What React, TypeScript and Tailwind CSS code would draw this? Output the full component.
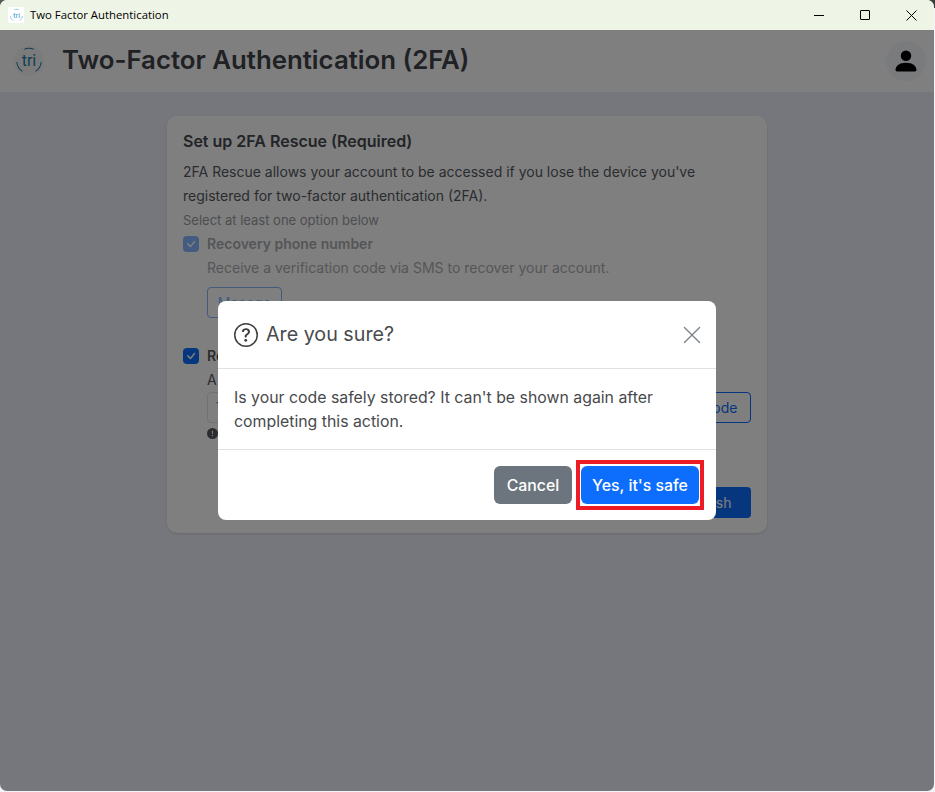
import React from "react";
import { BsQuestionCircle, BsXLg, BsPersonFill, BsExclamationCircleFill, BsCheck } from "react-icons/bs";

const inter = { fontFamily: "Inter, sans-serif" };

// small round "tri" logo, used in the title bar and the header
function TriLogo({ size, color, bg }: { size: number; color: string; bg?: string }) {
  return (
    <svg width={size} height={size} viewBox="0 0 32 32" fill="none">
      {bg && <circle cx="16" cy="16" r="16" fill={bg} />}
      <path d="M11 3.5a13.5 13.5 0 0 1 10 0" stroke={color} strokeWidth="1.1" />
      <path d="M3 17a13.5 13.5 0 0 0 6 10" stroke={color} strokeWidth="1.1" />
      <path d="M29 17a13.5 13.5 0 0 1-6 10" stroke={color} strokeWidth="1.1" />
      <text x="16" y="21.5" textAnchor="middle" fontSize="17" fill={color} fontFamily="Roboto, sans-serif">
        tri
      </text>
    </svg>
  );
}

function Checkbox() {
  return (
    <span className="flex h-4 w-4 shrink-0 items-center justify-center rounded-[4px] bg-[#0d6efd] text-white">
      <BsCheck size={16} />
    </span>
  );
}

function TitleBar() {
  return (
    <div className="flex h-[30px] shrink-0 items-center bg-[#eff5e6] pl-2 text-black">
      <span className="flex h-4 w-4 items-center justify-center bg-white">
        <TriLogo size={15} color="#3b9fd8" />
      </span>
      <span className="ml-[6px] text-[11.35px]" style={{ fontFamily: "'Open Sans', sans-serif" }}>
        Two Factor Authentication
      </span>
      <div className="ml-auto flex items-center">
        <span className="flex h-[30px] w-[46px] items-center justify-center">
          <span className="h-px w-[10px] bg-black" />
        </span>
        <span className="flex h-[30px] w-[46px] items-center justify-center">
          <span className="h-[10px] w-[10px] rounded-[1px] border border-black" />
        </span>
        <span className="flex h-[30px] w-[46px] items-center justify-center">
          <svg width="11" height="11" viewBox="0 0 11 11" stroke="black" strokeWidth="1">
            <path d="M.5.5l10 10M10.5.5l-10 10" />
          </svg>
        </span>
      </div>
    </div>
  );
}

function Header() {
  return (
    <div className="flex h-[62px] shrink-0 items-center bg-white pl-[14px] pr-[8px]">
      <TriLogo size={30} color="#1f7fa8" bg="#f6f6f8" />
      <h1 className="mb-[2px] ml-[18px] text-[25.8px] font-semibold text-[#3f4349]">
        Two-Factor Authentication (2FA)
      </h1>
      <div className="ml-auto flex h-10 w-10 items-center justify-center rounded-full bg-[#f5f6fa] text-black">
        <BsPersonFill size={28} />
      </div>
    </div>
  );
}

function RescueCard() {
  return (
    <div className="mx-auto mt-6 h-[417px] w-[600px] rounded-[10px] bg-white p-4 text-[14px] leading-6 text-[#55595e] shadow-sm">
      <h2 className="text-[16px] font-semibold leading-[18px] text-[#45494e]">Set up 2FA Rescue (Required)</h2>
      <p className="mt-[10px]">
        2FA Rescue allows your account to be accessed if you lose the device you've registered for two-factor
        authentication (2FA).
      </p>
      <p className="text-[13px] text-[#989ca1]">Select at least one option below</p>

      <div className="opacity-50">
        <div className="flex items-center gap-2">
          <Checkbox />
          <span className="font-semibold">Recovery phone number</span>
        </div>
        <p className="pl-6">Receive a verification code via SMS to recover your account.</p>
        <button className="ml-6 mt-[7px] h-[31px] w-[75px] rounded border border-[#0d6efd] text-[#0d6efd]">
          Manage
        </button>
      </div>

      <div className="mt-[26px] flex items-center gap-2">
        <Checkbox />
        <span className="font-semibold">Recovery code</span>
      </div>
      <p className="pl-6">A recovery code lets you access your account</p>
      <div className="flex items-center gap-2 pl-6">
        <div className="flex h-[31px] flex-1 items-center rounded border border-[#dee2e6] px-2">T4X9-8KQ2</div>
        <button className="h-[31px] w-[99px] rounded border border-[#0d6efd] text-[#0d6efd]">Copy code</button>
      </div>
      <div className="mt-[2px] flex h-[16px] items-center gap-1 pl-6 text-[12px]">
        <BsExclamationCircleFill size={11} />
        <span>Store this code safely</span>
      </div>

      <div className="mt-[46px] flex justify-end">
        <button className="h-[31px] w-[78px] rounded bg-[#0d6efd] text-white">Finish</button>
      </div>
    </div>
  );
}

function ConfirmModal() {
  return (
    <div className="absolute inset-0 bg-black/50">
      <div className="absolute left-[218px] top-[271px] w-[498px] rounded-lg bg-white text-[#484a4d]" style={inter}>
        <div className="flex h-[68px] items-center border-b border-[#dee2e6] pl-4 pr-[13px]">
          <BsQuestionCircle size={24} className="text-[#3c3e41]" />
          <span className="ml-2 text-[19.7px]">Are you sure?</span>
          <BsXLg size={22} className="ml-auto text-[#7c858c]" />
        </div>
        <p className="h-[81px] border-b border-[#dee2e6] px-4 pb-4 pt-[17px] text-[15.85px] leading-6">
          Is your code safely stored? It can't be shown again after completing this action.
        </p>
        <div className="flex h-[70px] items-center justify-end gap-[9px] pr-[17px] text-[15.85px] font-medium text-white">
          <button className="h-[38px] w-[78px] rounded-md bg-[#6c757d] pt-px">Cancel</button>
          <div className="relative">
            <button className="h-[38px] w-[118px] rounded-md bg-[#0d6efd] pt-px">Yes, it's safe</button>
            <span className="pointer-events-none absolute -inset-x-[5px] -inset-y-[6px] border-4 border-[#ed1c24]" />
          </div>
        </div>
      </div>
    </div>
  );
}

export default function App() {
  return (
    <div className="relative h-[792px] w-[935px] overflow-hidden bg-[#f2f3f5] pb-px pr-px">
      {/* desktop showing through the rounded top corners */}
      <span className="absolute left-0 top-0 h-2 w-2 bg-[#5a5a5a]" />
      <span className="absolute right-0 top-0 h-2 w-2 bg-[#3c3c3c]" />
      <div className="relative flex h-full w-full flex-col overflow-hidden rounded-[7px] bg-[#edeff8]" style={inter}>
        <TitleBar />
        <div className="relative flex-1">
          <Header />
          <RescueCard />
          <ConfirmModal />
        </div>
      </div>
    </div>
  );
}
